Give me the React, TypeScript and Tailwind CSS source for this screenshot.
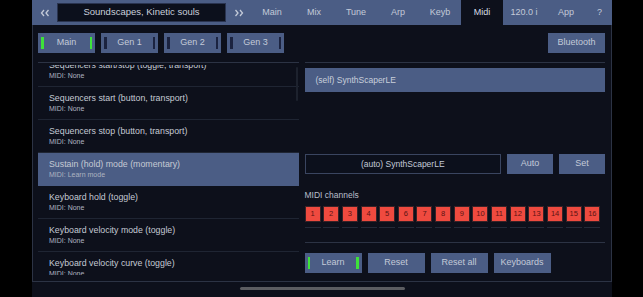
import React from "react";

const tabs = ["Main", "Mix", "Tune", "Arp", "Keyb", "Midi", "120.0 i", "App"];

const mappings = [
  { title: "Sequencers start/stop (toggle, transport)", midi: "MIDI: None" },
  { title: "Sequencers start (button, transport)", midi: "MIDI: None" },
  { title: "Sequencers stop (button, transport)", midi: "MIDI: None" },
  { title: "Sustain (hold) mode (momentary)", midi: "MIDI: Learn mode", selected: true },
  { title: "Keyboard hold (toggle)", midi: "MIDI: None" },
  { title: "Keyboard velocity mode (toggle)", midi: "MIDI: None" },
  { title: "Keyboard velocity curve (toggle)", midi: "MIDI: None" },
];

const channels = Array.from({ length: 16 }, (_, i) => i + 1);

// double chevron used for prev / next preset
const Chevrons: React.FC<{ dir: "left" | "right" }> = ({ dir }) => (
  <svg width="10" height="8" viewBox="0 0 10 8" fill="none" stroke="#c3cad8" strokeWidth="1.3">
    {dir === "left" ? (
      <>
        <path d="M4 1 L1.5 4 L4 7" />
        <path d="M8.5 1 L6 4 L8.5 7" />
      </>
    ) : (
      <>
        <path d="M1.5 1 L4 4 L1.5 7" />
        <path d="M6 1 L8.5 4 L6 7" />
      </>
    )}
  </svg>
);

const SlateButton: React.FC<{ label: string; bars?: "green" | "dark"; className?: string }> = ({
  label,
  bars,
  className = "",
}) => (
  <div
    className={`relative flex items-center justify-center bg-[#4b5d85] text-[#c3cad8] text-[9px] ${className}`}
  >
    {bars && (
      <span
        className={`absolute left-[3px] top-[4px] bottom-[4px] w-[2.5px] ${
          bars === "green" ? "bg-[#3ee23a]" : "bg-[#1b2340]"
        }`}
      />
    )}
    {label}
    {bars && (
      <span
        className={`absolute right-[3px] top-[4px] bottom-[4px] w-[2.5px] ${
          bars === "green" ? "bg-[#3ee23a]" : "bg-[#1b2340]"
        }`}
      />
    )}
  </div>
);

export default function App() {
  return (
    <div
      className="flex h-[297px] w-[643px] bg-black overflow-hidden"
      style={{ fontFamily: '"Liberation Sans", Arial, sans-serif' }}
    >
      <div className="w-[32px] shrink-0" />
      <div className="flex w-[580px] shrink-0 flex-col bg-[#0d101b]">
        {/* top bar */}
        <div className="flex h-[25px] items-stretch bg-[#4b5d85] text-[9px] text-[#c3cad8]">
          <div className="flex w-[25px] items-center justify-center">
            <Chevrons dir="left" />
          </div>
          <div className="my-[3px] flex w-[169px] items-center justify-center border border-[#2a3450] bg-[#0c101c] text-[9.5px] text-[#c9cfdb]">
            Soundscapes, Kinetic souls
          </div>
          <div className="flex w-[25px] items-center justify-center">
            <Chevrons dir="right" />
          </div>
          {tabs.map((t) => (
            <div
              key={t}
              className={`flex w-[42px] items-center justify-center ${
                t === "Midi" ? "bg-[#0d101b] text-[#d6dbe5]" : ""
              }`}
            >
              {t}
            </div>
          ))}
          <div className="flex w-[25px] items-center justify-center">?</div>
        </div>

        {/* body */}
        <div className="flex h-[257px] flex-col border-x border-b border-[#2c3344] pl-[5px] pr-[6px]">
          <div className="mt-[8px] flex h-[20px] items-stretch gap-[6px]">
            <SlateButton label="Main" bars="green" className="w-[57px]" />
            <SlateButton label="Gen 1" bars="dark" className="w-[57px]" />
            <SlateButton label="Gen 2" bars="dark" className="w-[57px]" />
            <SlateButton label="Gen 3" bars="dark" className="w-[57px]" />
            <div className="flex-1" />
            <SlateButton label="Bluetooth" className="w-[57px]" />
          </div>

          <div className="mt-[9px] flex flex-1 gap-[6px]">
            {/* mapping list */}
            <div className="w-[261px] border-t border-[#2c3344]">
              <div className="relative mt-[2px] h-[210px] overflow-hidden">
                <div className="-mt-[11px] flex flex-col">
                  {mappings.map((m) => (
                    <div
                      key={m.title}
                      className={`flex h-[33px] flex-col justify-center border-b pl-[11px] ${
                        m.selected ? "border-[#4b5d85] bg-[#4b5d85]" : "border-[#1f2533]"
                      }`}
                    >
                      <div className="text-[8.8px] leading-[12px] text-[#c5cad4]">{m.title}</div>
                      <div className="text-[7px] leading-[10px] text-[#aeb4c0]">{m.midi}</div>
                    </div>
                  ))}
                </div>
                <div className="absolute right-[1px] top-[2px] h-[34px] w-[2px] rounded-full bg-[#1d222e]" />
              </div>
            </div>

            {/* right column */}
            <div className="flex w-[301px] flex-col border-t border-[#2c3344]">
              <div className="mt-[5px] flex h-[24px] items-center bg-[#4b5d85] pl-[11px] text-[8.5px] text-[#c9cfdb]">
                (self) SynthScaperLE
              </div>
              <div className="mt-[62px] flex h-[20px] gap-[6px]">
                <div className="flex flex-1 items-center justify-center border border-[#3a4560] bg-[#0c101c] text-[8.5px] text-[#c3cad8]">
                  (auto) SynthScaperLE
                </div>
                <SlateButton label="Auto" className="w-[46px]" />
                <SlateButton label="Set" className="w-[46px]" />
              </div>
              <div className="mt-[16px] text-[8.5px] leading-[10px] text-[#b9bfcb]">MIDI channels</div>
              <div className="mt-[6px] flex gap-[2.67px]">
                {channels.map((c) => (
                  <div key={c} className="flex w-[16px] flex-col items-center">
                    <div className="flex h-[16px] w-[16px] items-center justify-center border border-[#3a2226] bg-[#ef4a3f] text-[7.5px] text-[#5a1414]">
                      {c}
                    </div>
                    <div className="mt-[5px] h-[1px] w-[16px] bg-[#242a38]" />
                  </div>
                ))}
              </div>
              <div className="mt-[14px] h-[1px] w-full bg-[#2c3344]" />
              <div className="mt-[10px] flex h-[20px] gap-[6px]">
                <SlateButton label="Learn" bars="green" className="w-[57px]" />
                <SlateButton label="Reset" className="w-[57px]" />
                <SlateButton label="Reset all" className="w-[57px]" />
                <SlateButton label="Keyboards" className="w-[57px]" />
              </div>
            </div>
          </div>
        </div>

        {/* home indicator strip */}
        <div className="flex flex-1 items-start justify-center pt-[5px]">
          <div className="h-[3px] w-[165px] rounded-full bg-[#5c5d61]" />
        </div>
      </div>
      <div className="flex-1" />
    </div>
  );
}
